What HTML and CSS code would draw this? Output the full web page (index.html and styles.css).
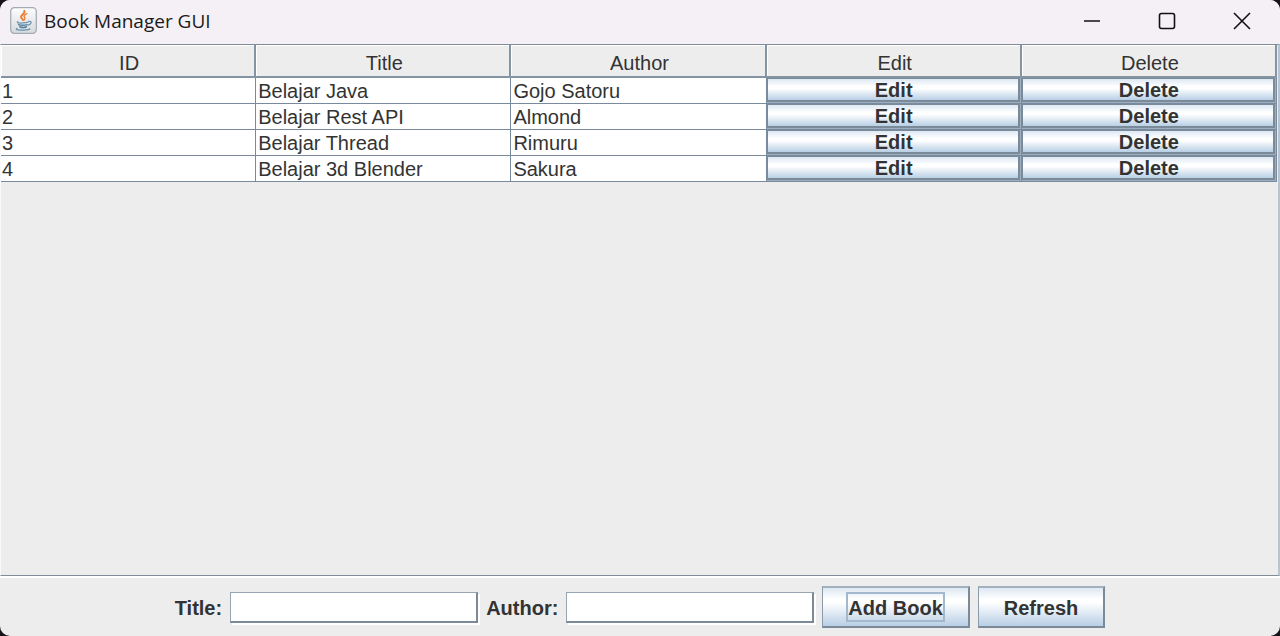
FILE: index.html
```html
<!DOCTYPE html>
<html lang="en">
<head>
<meta charset="utf-8">
<title>Book Manager GUI</title>
<link rel="stylesheet" href="styles.css">
</head>
<body>
<div class="window">
  <header class="titlebar">
    <svg class="app-icon" viewBox="0 0 26 26" aria-hidden="true">
      <defs>
        <linearGradient id="plate" x1="0" y1="0" x2="0" y2="1">
          <stop offset="0" stop-color="#fdfdfd"/>
          <stop offset="1" stop-color="#d5dade"/>
        </linearGradient>
      </defs>
      <rect x="0.7" y="0.7" width="24.6" height="24.6" rx="3.5" fill="url(#plate)" stroke="#a3abb2" stroke-width="1.2"/>
      <g fill="none" stroke-linecap="round">
        <path d="M13.800 3.600c1.400 2.500-3.600 3.800-3.100 6.200.2 1 1.400 1.700 1.900 2.800" stroke="#e8813c" stroke-width="1.900"/>
        <path d="M16.300 6.400c-2.600 1.100-3.400 2.100-2.200 3.600.6.9.3 1.700-.5 2.500" stroke="#e8813c" stroke-width="1.400"/>
        <path d="M7.400 14.200c-1.200 1 1.200 1.300 4.800 1.200 2.200 0 4.400-.2 5.300-.9" stroke="#6f93ad" stroke-width="1.200"/>
        <path d="M8.300 16.900c1.500.8 6.400.8 8.200 0M9.400 19c1.400.7 4.900.7 6.500 0" stroke="#557f9f" stroke-width="1.400"/>
        <path d="M18 13.900c2.900-.7 3.400 2.200-.2 3.600" stroke="#6f93ad" stroke-width="1.200"/>
        <path d="M6.600 20.700c-2.200 1.200 3 1.700 6.500 1.600 3.500 0 6.700-.6 5.700-1.500" stroke="#6f93ad" stroke-width="1.200"/>
      </g>
    </svg>
    <h1 class="caption">Book Manager GUI</h1>
    <div class="controls">
      <button class="control" type="button" aria-label="Minimize"><svg viewBox="0 0 18 18"><path d="M1 9h16"/></svg></button>
      <button class="control" type="button" aria-label="Maximize"><svg viewBox="0 0 18 18"><rect x="1.500" y="1.500" width="15" height="15" rx="2"/></svg></button>
      <button class="control" type="button" aria-label="Close"><svg viewBox="0 0 18 18"><path d="M1 1l16 16M17 1L1 17"/></svg></button>
    </div>
  </header>
  <main class="scroll-pane">
    <table class="books">
      <thead>
        <tr><th>ID</th><th>Title</th><th>Author</th><th>Edit</th><th>Delete</th></tr>
      </thead>
      <tbody>
        <tr><td>1</td><td>Belajar Java</td><td>Gojo Satoru</td><td class="action"><button class="cell-button" type="button">Edit</button></td><td class="action"><button class="cell-button" type="button">Delete</button></td></tr>
        <tr><td>2</td><td>Belajar Rest API</td><td>Almond</td><td class="action"><button class="cell-button" type="button">Edit</button></td><td class="action"><button class="cell-button" type="button">Delete</button></td></tr>
        <tr><td>3</td><td>Belajar Thread</td><td>Rimuru</td><td class="action"><button class="cell-button" type="button">Edit</button></td><td class="action"><button class="cell-button" type="button">Delete</button></td></tr>
        <tr><td>4</td><td>Belajar 3d Blender</td><td>Sakura</td><td class="action"><button class="cell-button" type="button">Edit</button></td><td class="action"><button class="cell-button" type="button">Delete</button></td></tr>
      </tbody>
    </table>
  </main>
  <form class="form-bar">
    <label class="field-label" for="title">Title:</label>
    <input class="field" id="title" type="text">
    <label class="field-label" for="author">Author:</label>
    <input class="field" id="author" type="text">
    <button class="push-button" type="button"><span class="button-text focused">Add Book</span></button>
    <button class="push-button" type="button"><span class="button-text">Refresh</span></button>
  </form>
</div>
</body>
</html>
```
FILE: styles.css
```css
* { box-sizing: border-box; }

body {
  margin: 0;
  background: #17131a;
  color: #333;
  font-family: "Liberation Sans", Arial, sans-serif;
  font-size: 20px;
}

.window {
  display: flex;
  flex-direction: column;
  min-height: 100vh;
  overflow: hidden;
  border-radius: 10px;
  background: #ededed;
}

.titlebar {
  display: flex;
  align-items: center;
  height: 44px;
  padding: 0 1px 3px 10px;
  background: #f4f0f5;
}

.app-icon { width: 27px; height: 27px; }

.caption {
  flex: 1;
  margin: 0 0 0 7px;
  padding-top: 1px;
  color: #1a1a1a;
  font: 400 19px/26px "Open Sans", "Noto Sans", sans-serif;
}

.controls { display: flex; }

.control {
  display: grid;
  place-items: center;
  width: 75px;
  height: 40px;
  padding: 0;
  border: 0;
  background: none;
}

.control svg {
  width: 18px;
  height: 18px;
  fill: none;
  stroke: #111;
  stroke-width: 1.6;
}

.scroll-pane {
  flex: 1;
  padding-right: 1px;
  border: 1px solid #7f8c99;
  border-left-color: #fafafa;
  border-right: 2px solid #b8c4d0;
}

.books {
  width: 100%;
  border-spacing: 0;
  table-layout: fixed;
}

.books th {
  height: 33px;
  padding: 6px 0 0 3px;
  border: solid #8594a2;
  border-width: 0 2px 2px 0;
  box-shadow: inset 1px 1px #fff;
  font-weight: 400;
  line-height: 25px;
}

.books td {
  height: 26px;
  padding: 1px 0 0 1px;
  border: solid #7a8a9e;
  border-width: 0 1px 1px 0;
  background: #fff;
  line-height: 24px;
}

.books td + td { padding-left: 2px; }

.books td.action {
  padding: 0 1px 1px 0;
  background: #9dafc0;
}

.cell-button {
  display: block;
  width: 100%;
  height: 24px;
  padding: 2px 0 0 2px;
  border: solid #7a8a99;
  border-width: 1px 2px 2px 1px;
  background: linear-gradient(#dde8f3, #fff 35%, #fff 45%, #b8cfe5);
  color: #333;
  font: bold 20px/19px "Liberation Sans", Arial, sans-serif;
}

.form-bar {
  display: flex;
  justify-content: center;
  align-items: center;
  gap: 8px;
  min-height: 60px;
  border-top: 2px solid #fff;
  font-weight: bold;
}

.field-label {
  padding-top: 2px;
  line-height: 24px;
}

.field {
  width: 248px;
  height: 31px;
  padding: 0 4px;
  border: 1px solid #96a3b0;
  border-right: 2px solid #7a8a99;
  border-bottom: 2px solid #7a8a99;
  background: #fff;
  box-shadow: 2px 2px #fff;
  font: 20px "Liberation Sans", Arial, sans-serif;
}

.push-button {
  height: 42px;
  padding: 0 23px;
  border: 2px solid #7a8a99;
  border-top-color: #a3b0bd;
  border-left: 1px solid #8c9baa;
  background: linear-gradient(#dde8f3, #fff 30%, #fff 38%, #b8cfe5);
  color: #333;
  font: bold 20px "Liberation Sans", Arial, sans-serif;
}

.button-text {
  display: block;
  padding-top: 2px;
  border: 2px solid transparent;
  line-height: 24px;
}

.focused { border-color: #a3b8cc; }
```
